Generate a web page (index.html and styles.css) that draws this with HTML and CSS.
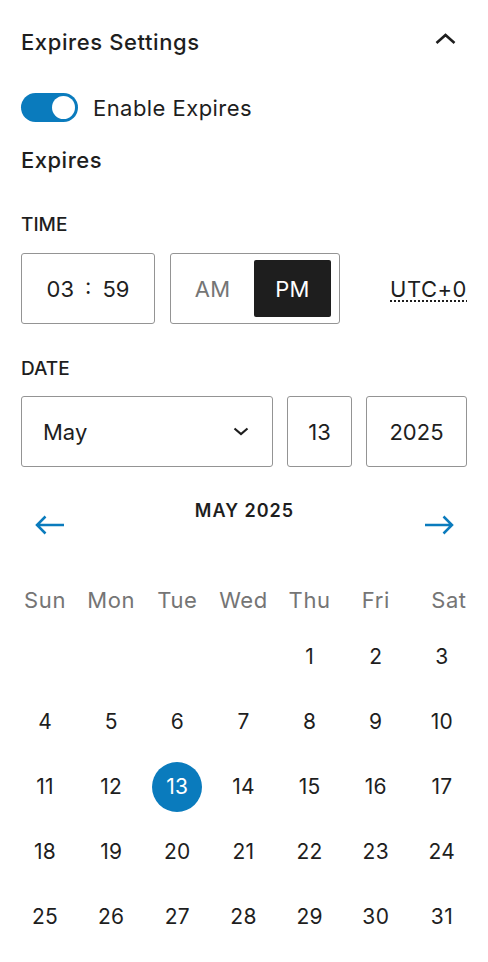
FILE: index.html
```html
<!DOCTYPE html>
<html lang="en">
<head>
    <meta charset="UTF-8">
    <meta name="viewport" content="width=device-width, initial-scale=1.0">
    <title>Expires Settings</title>
    <link rel="stylesheet" href="styles.css">
</head>
<body>
    <div class="panel">
        <div class="panel-header">
            <h2 class="panel-title">Expires Settings</h2>
            <svg class="panel-chevron" width="21" height="13" viewBox="0 0 21 13">
                <polyline points="1.5,11 10.5,3 19.5,11" fill="none" stroke="#1e1e1e" stroke-width="2.6"/>
            </svg>
        </div>

        <div class="toggle-row">
            <span class="toggle is-checked"><span class="toggle-knob"></span></span>
            <span class="toggle-label">Enable Expires</span>
        </div>

        <div class="field-title">Expires</div>

        <!-- 時間 -->
        <div class="section-label">TIME</div>
        <div class="time-row">
            <div class="time-field">
                <span>03</span>
                <span class="time-sep">:</span>
                <span>59</span>
            </div>
            <div class="ampm">
                <span class="ampm-btn am">AM</span>
                <span class="ampm-btn pm is-active">PM</span>
            </div>
            <span class="timezone">UTC+0</span>
        </div>

        <!-- 日期 -->
        <div class="section-label date-label">DATE</div>
        <div class="date-row">
            <div class="date-field month">
                <span>May</span>
                <svg width="16" height="9" viewBox="0 0 16 9">
                    <polyline points="1.5,1.5 8,7 14.5,1.5" fill="none" stroke="#1e1e1e" stroke-width="2.2"/>
                </svg>
            </div>
            <div class="date-field day">13</div>
            <div class="date-field year">2025</div>
        </div>

        <!-- 月曆 -->
        <div class="calendar-nav">
            <svg class="nav-arrow prev" width="30" height="20" viewBox="0 0 30 20">
                <path d="M29 10H2M10.5 1.5L2 10l8.5 8.5" fill="none" stroke="#0a7bbd" stroke-width="2.5"/>
            </svg>
            <div class="calendar-title">MAY 2025</div>
            <svg class="nav-arrow next" width="30" height="20" viewBox="0 0 30 20">
                <path d="M1 10h27M19.5 1.5L28 10l-8.5 8.5" fill="none" stroke="#0a7bbd" stroke-width="2.5"/>
            </svg>
        </div>

        <div class="weekdays">
            <span>Sun</span><span>Mon</span><span>Tue</span><span>Wed</span><span>Thu</span><span>Fri</span><span class="sat">Sat</span>
        </div>

        <div class="days">
            <span></span><span></span><span></span><span></span>
            <span>1</span><span>2</span><span>3</span>
            <span>4</span><span>5</span><span>6</span><span>7</span><span>8</span><span>9</span><span>10</span>
            <span>11</span><span>12</span><span class="is-selected"><b>13</b></span><span>14</span><span>15</span><span>16</span><span>17</span>
            <span>18</span><span>19</span><span>20</span><span>21</span><span>22</span><span>23</span><span>24</span>
            <span>25</span><span>26</span><span>27</span><span>28</span><span>29</span><span>30</span><span>31</span>
        </div>
    </div>
</body>
</html>
```

FILE: styles.css
```css
* {
    box-sizing: border-box;
}

body {
    margin: 0;
    font-family: Inter, "Noto Sans", sans-serif;
    color: #1e1e1e;
    background-color: #ffffff;
}

.panel {
    padding: 18px 21px 0;
}

/* 標題列 */
.panel-header {
    display: flex;
    align-items: center;
    justify-content: space-between;
    height: 48px;
}

.panel-title {
    margin: 0;
    font-size: 22px;
    font-weight: 500;
    line-height: 24px;
    letter-spacing: 0.6px;
}

.panel-chevron {
    margin: 0 11px 7px 0;
}

/* 開關 */
.toggle-row {
    display: flex;
    align-items: center;
    gap: 15px;
    margin-top: 27px;
}

.toggle {
    display: flex;
    align-items: center;
    justify-content: flex-end;
    width: 57px;
    height: 29px;
    padding: 0 3px;
    border-radius: 15px;
    background-color: #0a7bbd;
}

.toggle-knob {
    width: 23px;
    height: 23px;
    border-radius: 50%;
    background-color: #ffffff;
}

.toggle-label {
    font-size: 22px;
    line-height: 24px;
    letter-spacing: 0.45px;
}

.field-title {
    margin-top: 26px;
    font-size: 22px;
    font-weight: 500;
    line-height: 24px;
    letter-spacing: 0.5px;
}

.section-label {
    margin-top: 43px;
    font-size: 19px;
    font-weight: 500;
    line-height: 20px;
}

.date-label {
    margin-top: 35px;
}

/* 時間 */
.time-row {
    display: flex;
    align-items: center;
    gap: 15px;
    margin-top: 18px;
}

.time-field {
    display: flex;
    align-items: center;
    justify-content: center;
    width: 134px;
    height: 71px;
    border: 1px solid #949494;
    border-radius: 3px;
    font-size: 22px;
}

.time-sep {
    margin: 0 11px;
    padding-bottom: 6px;
}

.ampm {
    display: flex;
    width: 170px;
    height: 71px;
    padding: 6px 8px 6px 0;
    border: 1px solid #949494;
    border-radius: 3px;
}

.ampm-btn {
    display: flex;
    align-items: center;
    justify-content: center;
    font-size: 22px;
    letter-spacing: 0.3px;
}

.ampm-btn.am {
    width: 83px;
    color: #757575;
}

.ampm-btn.pm {
    width: 77px;
}

.ampm-btn.is-active {
    background-color: #1e1e1e;
    color: #ffffff;
    border-radius: 2px;
}

.timezone {
    margin-left: auto;
    font-size: 22px;
    letter-spacing: 0.5px;
    text-decoration: underline dotted 2px;
    text-underline-offset: 4px;
}

/* 日期 */
.date-row {
    display: flex;
    gap: 14px;
    margin-top: 17px;
}

.date-field {
    display: flex;
    align-items: center;
    justify-content: center;
    height: 71px;
    border: 1px solid #949494;
    border-radius: 3px;
    font-size: 22px;
}

.date-field.month {
    justify-content: space-between;
    width: 252px;
    padding: 0 23px 0 21px;
}

.date-field.day {
    width: 65px;
}

.date-field.year {
    width: 101px;
}

/* 月曆 */
.calendar-nav {
    display: flex;
    align-items: center;
    justify-content: space-between;
    height: 50px;
    margin-top: 33px;
}

.nav-arrow.prev {
    margin-left: 14px;
}

.nav-arrow.next {
    margin-right: 13px;
}

.calendar-title {
    align-self: flex-start;
    font-size: 18px;
    font-weight: 600;
    line-height: 22px;
    letter-spacing: 1px;
}

.weekdays,
.days {
    display: grid;
    grid-template-columns: repeat(7, 1fr);
    margin: 0 -8px 0 -9px;
}

.weekdays {
    height: 48px;
    margin-top: 26px;
    color: #757575;
    font-size: 22px;
    letter-spacing: 0.6px;
}

.days {
    grid-auto-rows: 65px;
    font-size: 21px;
    letter-spacing: 0.3px;
}

.weekdays span,
.days span {
    display: flex;
    align-items: center;
    justify-content: center;
}

.weekdays .sat {
    padding-left: 14px;
}

.days .is-selected b {
    display: flex;
    align-items: center;
    justify-content: center;
    width: 50px;
    height: 50px;
    border-radius: 50%;
    background-color: #0a7bbd;
    color: #ffffff;
    font-weight: 400;
}
```
